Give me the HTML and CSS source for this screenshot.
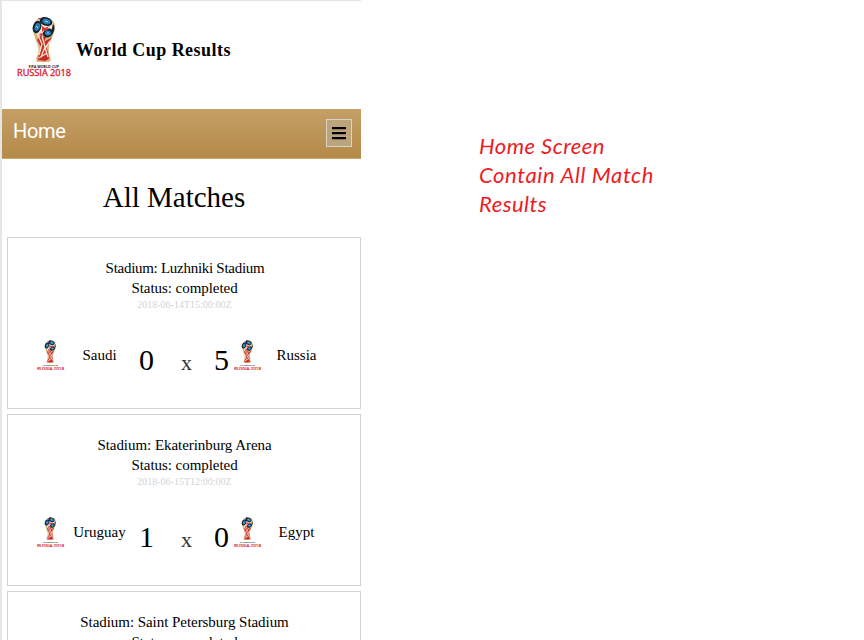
FILE: index.html
```html
<!DOCTYPE html>
<html lang="en">
<head>
<meta charset="utf-8">
<title>World Cup Results</title>
<link rel="stylesheet" href="styles.css">
</head>
<body>
<svg class="defs" aria-hidden="true">
  <symbol id="cup" viewBox="0 0 54 60" overflow="visible">
    <path fill="#d8b67a" d="M16 10Q18 1 26 0Q35 0 38 8Q38 16 34 23Q30 31 33 40Q35 44 32 45L20 45Q18 43 21 37Q23 31 19 24Q16 17 16 10Z"/>
    <path fill="#c92a2b" d="M17 14L20 23L24 18L29 20L27 25L35 20L29 30L31 35L32 42L28 44L21 43L22 36L24 30L20 23Z"/>
    <path fill="none" stroke="#f6e6cf" stroke-width="1.3" d="M20 16L25 27L22 38M25 19L28 30L24 40M33 24L28 31L31 40M22 41L30 36"/>
    <circle cx="27" cy="10" r="9.5" fill="#f2e5d7"/>
    <g fill="#14202b">
      <ellipse cx="29" cy="4.5" rx="6.5" ry="4.3" transform="rotate(18 29 4.5)"/>
      <ellipse cx="20" cy="10" rx="4.2" ry="6.3" transform="rotate(18 20 10)"/>
      <ellipse cx="31" cy="16" rx="5.3" ry="4.2" transform="rotate(-28 31 16)"/>
      <path d="M36 7Q39 11 36 16Q34 12 36 7Z"/>
    </g>
    <g fill="#247fb8">
      <ellipse cx="29.5" cy="4.5" rx="4.2" ry="2.7" transform="rotate(18 29.5 4.5)"/>
      <ellipse cx="20.3" cy="10" rx="2.6" ry="4.1" transform="rotate(18 20.3 10)"/>
      <ellipse cx="31" cy="16" rx="3.2" ry="2.5"/>
    </g>
    <path fill="#d5352f" d="M25 9L28 11L32 9L30 12L31 14L27 13L25 15ZM21 1L24 1L22 3ZM22 17L26 16L25 20Z"/>
    <path stroke="#d9ecf4" stroke-width=".8" d="M28 4L31 5M19 9L21 11M30 16L32 16"/>
    <text x="11.5" y="50.5" font-size="3.8" font-weight="700" fill="#222" textLength="30.5" lengthAdjust="spacingAndGlyphs">FIFA WORLD CUP</text>
    <text x="0" y="58.6" font-size="8.4" fill="#dc2030" stroke="#dc2030" stroke-width=".3" textLength="54" lengthAdjust="spacingAndGlyphs">RUSSIA 2018</text>
  </symbol>
</svg>
<div class="page">
  <main class="phone">
    <header class="brand">
      <svg class="logo"><use href="#cup"/></svg>
      <h1>World Cup Results</h1>
    </header>
    <nav class="bar">
      <span class="home">Home</span>
      <button class="menu" aria-label="Menu"><i></i><i></i><i></i></button>
    </nav>
    <h2>All Matches</h2>
    <section class="card">
      <p class="tight">Stadium: Luzhniki Stadium</p>
      <p>Status: completed</p>
      <time>2018-06-14T15:00:00Z</time>
      <div class="match">
        <svg class="flag"><use href="#cup"/></svg><span class="team">Saudi</span><b>0</b><span class="vs">x</span><b>5</b><svg class="flag away"><use href="#cup"/></svg><span class="team">Russia</span>
      </div>
    </section>
    <section class="card">
      <p>Stadium: Ekaterinburg Arena</p>
      <p>Status: completed</p>
      <time>2018-06-15T12:00:00Z</time>
      <div class="match">
        <svg class="flag"><use href="#cup"/></svg><span class="team">Uruguay</span><b>1</b><span class="vs">x</span><b>0</b><svg class="flag away"><use href="#cup"/></svg><span class="team">Egypt</span>
      </div>
    </section>
    <section class="card">
      <p>Stadium: Saint Petersburg Stadium</p>
      <p>Status: completed</p>
    </section>
  </main>
  <aside class="note"><span class="wide">Home Screen</span><br><span class="wider">Contain All Match</span><br><span class="wide">Results</span></aside>
</div>
</body>
</html>
```
FILE: styles.css
```css
* { box-sizing: border-box; }
body { margin: 0; background: #fff; color: #000; font-family: "Liberation Serif", serif; }
h1, h2, p { margin: 0; font-weight: 400; }
.defs { display: block; width: 0; height: 0; }
symbol text { font-family: "Open Sans", sans-serif; }
.page { display: flex; height: 640px; overflow: hidden; }
.phone { width: 361px; flex: none; border-top: 1px solid #e4e4e4; border-left: 2px solid #e6e6e6; }
.brand { display: flex; height: 108px; padding: 16px 0 0 15px; }
.logo { width: 54px; height: 60px; flex: none; overflow: visible; }
.brand h1 { margin: 22px 0 0 5px; font-size: 18px; line-height: 22px; font-weight: 700; letter-spacing: .46px; white-space: nowrap; }
.bar { display: flex; justify-content: space-between; height: 50px; padding: 10px 9px 0 11px; background: linear-gradient(#c49f66, #b48a49); border-bottom: 1px solid #cda76b; }
.home { font: 20px/24px Roboto, sans-serif; color: #fff; letter-spacing: -.3px; }
.menu { display: flex; flex-direction: column; align-items: center; gap: 3px; width: 26px; height: 28px; padding: 7px 0 0; border: 1px solid #d6d3cd; background: #bca47d; }
.menu i { width: 14px; height: 2px; background: #000; box-shadow: 0 1px 1px #8d7858; }
h2 { height: 78px; padding: 20px 15px 0 0; text-align: center; font-size: 29px; line-height: 36px; }
.card { height: 172px; margin: 0 0 5px 5px; padding-top: 20px; border: 1px solid #d3d3d3; text-align: center; font-size: 15px; }
.card p { line-height: 20px; white-space: nowrap; letter-spacing: -.05px; padding-left: 1px; }
.card .tight { letter-spacing: -.28px; padding-left: 2px; }
.card time { display: block; height: 12px; padding-left: 1px; font-size: 10px; line-height: 14px; color: #d3d3d3; }
.match { display: grid; grid-template-columns: 27px 71px 23px 56px 15px 32px 71px; padding-left: 29px; margin-top: 30px; }
.flag { width: 27px; height: 31px; overflow: visible; }
.away { margin-left: 5px; }
.team { line-height: 30px; white-space: nowrap; }
.match b { font-weight: 400; font-size: 30px; line-height: 40px; }
.vs { padding-left: 1px; font-size: 22px; line-height: 46px; color: #333; }
.note { padding: 131px 0 0 118px; font: italic 22px/29px Lato, sans-serif; color: #ed1c24; white-space: nowrap; }
.wide { letter-spacing: .48px; }
.wider { letter-spacing: .62px; }
```
